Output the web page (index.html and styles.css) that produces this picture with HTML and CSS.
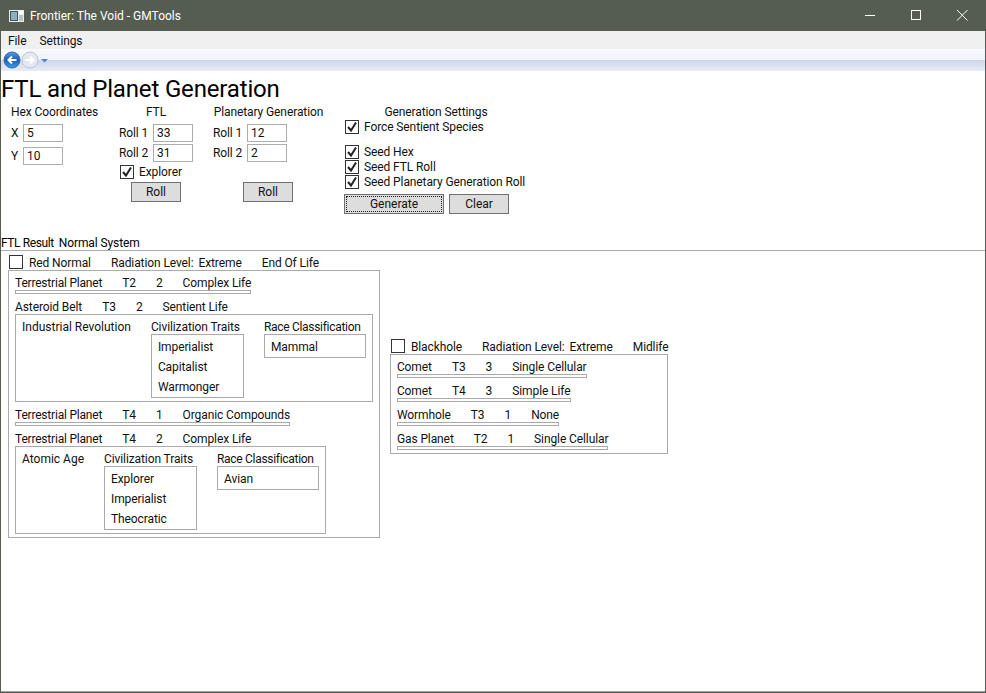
FILE: index.html
```html
<!DOCTYPE html>
<html lang="en">
<head>
    <meta charset="UTF-8">
    <meta name="viewport" content="width=device-width, initial-scale=1.0">
    <title>Frontier: The Void - GMTools</title>
    <link rel="stylesheet" href="styles.css">
</head>
<body>
    <div class="window">
        <div class="titlebar">
            <svg class="app-icon" width="16" height="14" viewBox="0 0 16 14">
                <rect x="0" y="1" width="15" height="12" fill="#e8eef0"/>
                <rect x="1" y="2" width="8" height="10" fill="#3d5560"/>
                <rect x="2" y="3" width="6" height="8" fill="#8fb0b8"/>
                <rect x="10" y="2" width="4" height="3" fill="#ffffff"/>
                <rect x="10" y="6" width="4" height="6" fill="#b4c4c8"/>
            </svg>
            <span class="title-text">Frontier: The Void - GMTools</span>
            <div class="window-buttons">
                <svg width="46" height="31" viewBox="0 0 46 31"><path d="M18 15.500h10" stroke="#fff" fill="none"/></svg>
                <svg width="46" height="31" viewBox="0 0 46 31"><rect x="18.500" y="10.500" width="9" height="9" stroke="#fff" fill="none"/></svg>
                <svg width="46" height="31" viewBox="0 0 46 31"><path d="M18 10l10.500 10.500M28.500 10L18 20.500" stroke="#fff" fill="none"/></svg>
            </div>
        </div>

        <div class="menubar">
            <span>File</span>
            <span>Settings</span>
        </div>

        <div class="navbar">
            <svg width="50" height="20" viewBox="0 0 50 20">
                <defs>
                    <linearGradient id="backFill" x1="0" y1="0" x2="0" y2="1">
                        <stop offset="0" stop-color="#5f9bdc"/>
                        <stop offset="0.5" stop-color="#1d5cb4"/>
                        <stop offset="1" stop-color="#38a0e8"/>
                    </linearGradient>
                </defs>
                <circle cx="11" cy="10" r="8" fill="url(#backFill)" stroke="#3a6ea8"/>
                <path d="M15.500 10H7.500M11 6.500L7.500 10L11 13.500" stroke="#fff" stroke-width="2" fill="none"/>
                <circle cx="29" cy="10" r="8" fill="#e4e8f2" stroke="#bcc4d8"/>
                <path d="M24.500 10H32.500M29 6.500L32.500 10L29 13.500" stroke="#fff" stroke-width="2" fill="none"/>
                <path d="M40 9h7l-3.500 3.500z" fill="#4a88c8"/>
            </svg>
        </div>

        <div class="page">
            <h1>FTL and Planet Generation</h1>

            <div class="controls">
                <div class="group group-hex">
                    <div class="group-title">Hex Coordinates</div>
                    <div class="field"><label class="field-axis">X</label><input type="text" value="5"></div>
                    <div class="field field-loose"><label class="field-axis">Y</label><input type="text" value="10"></div>
                </div>

                <div class="group group-ftl">
                    <div class="group-title">FTL</div>
                    <div class="field"><label class="field-roll">Roll 1</label><input type="text" value="33"></div>
                    <div class="field"><label class="field-roll">Roll 2</label><input type="text" value="31"></div>
                    <div class="check check-explorer">
                        <span class="box"><svg width="12" height="12" viewBox="0 0 12 12"><path d="M2 6l3 3.500L10 1.500" stroke="#222" stroke-width="2" fill="none"/></svg></span>
                        Explorer
                    </div>
                    <button class="btn btn-roll" type="button">Roll</button>
                </div>

                <div class="group group-planet">
                    <div class="group-title">Planetary Generation</div>
                    <div class="field"><label class="field-roll">Roll 1</label><input type="text" value="12"></div>
                    <div class="field"><label class="field-roll">Roll 2</label><input type="text" value="2"></div>
                    <button class="btn btn-roll-planet" type="button">Roll</button>
                </div>

                <div class="group group-settings">
                    <div class="group-title">Generation Settings</div>
                    <div class="check">
                        <span class="box"><svg width="12" height="12" viewBox="0 0 12 12"><path d="M2 6l3 3.500L10 1.500" stroke="#222" stroke-width="2" fill="none"/></svg></span>
                        Force Sentient Species
                    </div>
                    <div class="check check-gap">
                        <span class="box"><svg width="12" height="12" viewBox="0 0 12 12"><path d="M2 6l3 3.500L10 1.500" stroke="#222" stroke-width="2" fill="none"/></svg></span>
                        Seed Hex
                    </div>
                    <div class="check">
                        <span class="box"><svg width="12" height="12" viewBox="0 0 12 12"><path d="M2 6l3 3.500L10 1.500" stroke="#222" stroke-width="2" fill="none"/></svg></span>
                        Seed FTL Roll
                    </div>
                    <div class="check">
                        <span class="box"><svg width="12" height="12" viewBox="0 0 12 12"><path d="M2 6l3 3.500L10 1.500" stroke="#222" stroke-width="2" fill="none"/></svg></span>
                        Seed Planetary Generation Roll
                    </div>
                    <div class="settings-buttons">
                        <button class="btn btn-generate" type="button"><span class="focus-ring">Generate</span></button>
                        <button class="btn btn-clear" type="button">Clear</button>
                    </div>
                </div>
            </div>

            <div class="ftl-result"><span class="ftl-label">FTL Result</span><span>Normal System</span></div>

            <div class="results">
                <div class="system">
                    <div class="system-head">
                        <span class="box"></span>
                        <span class="system-name">Red Normal</span>
                        <span class="system-rad">Radiation Level:</span>
                        <span class="system-level">Extreme</span>
                        <span class="system-age">End Of Life</span>
                    </div>
                    <div class="system-body">
                        <div class="planet">
                            <div class="planet-head"><span class="planet-long">Terrestrial Planet</span><span>T2</span><span>2</span><span>Complex Life</span></div>
                            <div class="planet-bar"></div>
                        </div>
                        <div class="planet">
                            <div class="planet-head"><span>Asteroid Belt</span><span>T3</span><span>2</span><span>Sentient Life</span></div>
                            <div class="civ">
                                <div class="civ-era">Industrial Revolution</div>
                                <div class="civ-traits">
                                    <div class="civ-label">Civilization Traits</div>
                                    <ul class="civ-list"><li>Imperialist</li><li>Capitalist</li><li>Warmonger</li></ul>
                                </div>
                                <div class="civ-race">
                                    <div class="civ-label">Race Classification</div>
                                    <ul class="civ-list"><li>Mammal</li></ul>
                                </div>
                            </div>
                        </div>
                        <div class="planet">
                            <div class="planet-head"><span class="planet-long">Terrestrial Planet</span><span>T4</span><span>1</span><span>Organic Compounds</span></div>
                            <div class="planet-bar"></div>
                        </div>
                        <div class="planet">
                            <div class="planet-head"><span class="planet-long">Terrestrial Planet</span><span>T4</span><span>2</span><span>Complex Life</span></div>
                            <div class="civ">
                                <div class="civ-era">Atomic Age</div>
                                <div class="civ-traits">
                                    <div class="civ-label">Civilization Traits</div>
                                    <ul class="civ-list"><li>Explorer</li><li>Imperialist</li><li>Theocratic</li></ul>
                                </div>
                                <div class="civ-race">
                                    <div class="civ-label">Race Classification</div>
                                    <ul class="civ-list"><li>Avian</li></ul>
                                </div>
                            </div>
                        </div>
                    </div>
                </div>

                <div class="system">
                    <div class="system-head">
                        <span class="box"></span>
                        <span class="system-name">Blackhole</span>
                        <span class="system-rad">Radiation Level:</span>
                        <span class="system-level">Extreme</span>
                        <span class="system-age">Midlife</span>
                    </div>
                    <div class="system-body">
                        <div class="planet">
                            <div class="planet-head"><span>Comet</span><span>T3</span><span>3</span><span>Single Cellular</span></div>
                            <div class="planet-bar"></div>
                        </div>
                        <div class="planet">
                            <div class="planet-head"><span>Comet</span><span>T4</span><span>3</span><span>Simple Life</span></div>
                            <div class="planet-bar"></div>
                        </div>
                        <div class="planet">
                            <div class="planet-head"><span>Wormhole</span><span>T3</span><span>1</span><span>None</span></div>
                            <div class="planet-bar"></div>
                        </div>
                        <div class="planet">
                            <div class="planet-head"><span>Gas Planet</span><span>T2</span><span>1</span><span>Single Cellular</span></div>
                            <div class="planet-bar"></div>
                        </div>
                    </div>
                </div>
            </div>
        </div>
    </div>
</body>
</html>
```

FILE: styles.css
```css
* {
    box-sizing: border-box;
}
html, body {
    margin: 0;
    height: 100%;
}
body {
    font-family: Roboto, "Liberation Sans", sans-serif;
    font-size: 12px;
    line-height: 15px;
    letter-spacing: -0.1px;
    color: #111;
    background-color: #fff;
    overflow: hidden;
    white-space: nowrap;
}
.window {
    height: 693px;
    display: flex;
    flex-direction: column;
    border: 1px solid #555d50;
    border-top: 0;
}
.titlebar {
    height: 31px;
    flex: none;
    display: flex;
    align-items: center;
    padding-left: 8px;
    background-color: #555d50;
    color: #fff;
}
.app-icon {
    margin-right: 5px;
}
.title-text {
    padding-top: 2px;
    letter-spacing: 0;
}
.window-buttons {
    margin-left: auto;
    display: flex;
}
.window-buttons svg {
    display: block;
}
.menubar {
    height: 18px;
    flex: none;
    display: flex;
    align-items: center;
    gap: 13px;
    padding: 2px 0 0 7px;
    background-color: #f0f0f0;
}
.navbar {
    height: 22px;
    flex: none;
    padding-top: 1px;
    background: linear-gradient(#f8f9fe 0, #f0f3fb 49%, #ccd5ec 50%, #e8ecf8 100%);
}
.navbar svg {
    display: block;
}
.page {
    flex: 1;
    display: flex;
    flex-direction: column;
    min-height: 0;
    border-bottom: 1px solid #a0a0a0;
}
h1 {
    margin: 0;
    height: 33px;
    padding-top: 1px;
    font-size: 24px;
    font-weight: normal;
    line-height: 34px;
    letter-spacing: -0.16px;
    color: #000;
}
.controls {
    height: 131px;
    flex: none;
    display: flex;
    padding-left: 10px;
}
.group-title {
    height: 20px;
    line-height: 16px;
    text-align: center;
}
.group-hex {
    width: 88px;
    margin-right: 20px;
}
.group-hex .group-title {
    text-align: left;
}
.group-ftl {
    width: 74px;
    margin-right: 20px;
}
.group-planet {
    width: 111px;
    margin-right: 21px;
}
.group-settings {
    width: 182px;
}
.group-settings .group-title {
    height: 16px;
}
.field {
    display: flex;
    align-items: center;
    height: 18px;
    margin-bottom: 2px;
}
.field-loose {
    margin-top: 5px;
}
.field-axis {
    width: 12px;
}
.field-roll {
    width: 34px;
}
input[type="text"] {
    width: 40px;
    height: 18px;
    padding: 0 3px;
    border: 1px solid #abadb3;
    border-radius: 0;
    font: inherit;
    color: #111;
}
.check {
    display: flex;
    align-items: flex-start;
    gap: 5px;
    height: 15px;
}
.check-explorer {
    margin: 1px 0 2px 1px;
    padding-top: 1px;
    height: 16px;
}
.check-gap {
    margin-top: 10px;
}
.box {
    width: 14px;
    height: 14px;
    flex: none;
    display: block;
    border: 1px solid #333;
    background-color: #fff;
}
.box svg {
    display: block;
}
.btn {
    display: block;
    height: 20px;
    padding: 0;
    border: 1px solid #707070;
    border-radius: 0;
    background-color: #ddd;
    font: inherit;
    color: #111;
}
.btn-roll {
    width: 50px;
    margin-left: 12px;
}
.btn-roll-planet {
    width: 50px;
    margin: 20px 0 0 30px;
}
.settings-buttons {
    display: flex;
    gap: 5px;
    margin: 4px 0 0 -1px;
}
.btn-generate {
    width: 100px;
    padding: 1px;
}
.focus-ring {
    display: block;
    height: 16px;
    line-height: 15px;
    border: 1px dotted #222;
}
.btn-clear {
    width: 60px;
}
.ftl-result {
    height: 15px;
    flex: none;
    display: flex;
    gap: 5px;
    line-height: 17px;
    color: #000;
}
.ftl-label {
    letter-spacing: -0.4px;
}
.results {
    flex: none;
    display: flex;
    align-items: center;
    gap: 10px;
    height: 288px;
    padding: 4px 0 0 7px;
    border-top: 1px solid #aaa;
}
.system-head {
    display: flex;
    height: 15px;
    padding-left: 1px;
    line-height: 17px;
}
.system-name {
    margin: 0 20px 0 6px;
}
.system-rad {
    margin-right: 5px;
}
.system-level {
    margin-right: 20px;
}
.system-body {
    display: flex;
    flex-direction: column;
    align-items: flex-start;
    gap: 5px;
    padding: 4px 6px 3px;
    border: 1px solid #aaa;
}
.planet {
    display: flex;
    flex-direction: column;
    align-items: flex-start;
}
.planet-head {
    display: flex;
    gap: 20px;
    height: 15px;
    line-height: 17px;
}
.planet-long {
    letter-spacing: -0.2px;
}
.planet-bar {
    align-self: stretch;
    height: 4px;
    border: 1px solid #aaa;
}
.civ {
    display: flex;
    gap: 20px;
    padding: 4px 6px 3px;
    border: 1px solid #aaa;
}
.civ-era, .civ-label {
    height: 15px;
    line-height: 17px;
}
.civ-era {
    letter-spacing: 0;
}
.civ-traits {
    width: 93px;
}
.civ-race {
    width: 102px;
}
.civ-race .civ-label {
    letter-spacing: -0.3px;
}
ul.civ-list {
    margin: 0;
    padding: 0 6px 2px;
    list-style: none;
    border: 1px solid #aaa;
}
.civ-list li {
    height: 20px;
    line-height: 25px;
}
```
